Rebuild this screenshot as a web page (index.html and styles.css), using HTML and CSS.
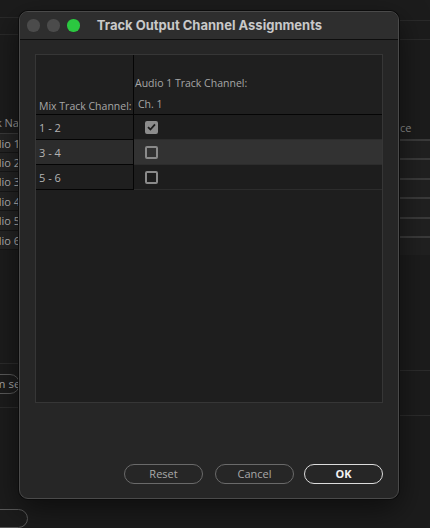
FILE: index.html
```html
<!DOCTYPE html>
<html>
<head>
<meta charset="utf-8">
<link rel="stylesheet" href="styles.css">
</head>
<body>
<div class="app">
  <div class="pane pane-left">
    <div class="ruler"></div>
    <div class="ruler ruler-2"></div>
    <div class="list">
      <div class="list-head"><span class="cut-head">Track Name</span></div>
      <div class="list-row"><span class="cut-row">Audio 1</span></div>
      <div class="list-row"><span class="cut-row">Audio 2</span></div>
      <div class="list-row"><span class="cut-row">Audio 3</span></div>
      <div class="list-row"><span class="cut-row">Audio 4</span></div>
      <div class="list-row"><span class="cut-row">Audio 5</span></div>
      <div class="list-row"><span class="cut-row">Audio 6</span></div>
    </div>
    <div class="left-foot">
      <div class="rule-a"></div>
      <div class="bg-btn"><span class="cut-btn">Custom setup</span></div>
      <div class="rule-b"></div>
      <div class="bg-btn bg-btn-bottom"></div>
    </div>
  </div>
  <div class="pane pane-right">
    <div class="ruler"></div>
    <div class="ruler ruler-2"></div>
    <div class="rlist">
      <div class="rlist-head"><span class="cut-src">Source</span></div>
      <div class="rlist-row"></div>
      <div class="rlist-row"></div>
      <div class="rlist-row"></div>
      <div class="rlist-row"></div>
      <div class="rlist-row"></div>
      <div class="rlist-row"></div>
    </div>
    <div class="right-foot">
      <div class="rule-a"></div>
      <div class="rule-b"></div>
    </div>
  </div>
</div>

<div class="dialog">
  <div class="titlebar">
    <div class="lights">
      <span class="light"></span>
      <span class="light"></span>
      <span class="light light-green"></span>
    </div>
    <div class="title">Track Output Channel Assignments</div>
  </div>
  <div class="body">
    <div class="panel">
      <div class="grid">
        <div class="cell head head-left"><span>Mix Track Channel:</span></div>
        <div class="cell head head-right">
          <span class="head-l1">Audio 1 Track Channel:</span>
          <span class="head-l2">Ch. 1</span>
        </div>

        <div class="cell rl">1 - 2</div>
        <div class="cell rr"><span class="cb cb-on"><svg width="9" height="8" viewBox="0 0 9 8"><path d="M1 4.2 L3.4 6.5 L8 1.3" fill="none" stroke="#1e1e1e" stroke-width="1.8"/></svg></span></div>

        <div class="cell rl hl">3 - 4</div>
        <div class="cell rr hl"><span class="cb"></span></div>

        <div class="cell rl">5 - 6</div>
        <div class="cell rr"><span class="cb"></span></div>
      </div>
    </div>
    <div class="buttons">
      <button class="btn">Reset</button>
      <button class="btn btn-cancel">Cancel</button>
      <button class="btn btn-ok">OK</button>
    </div>
  </div>
</div>
</body>
</html>
```

FILE: styles.css
```css
* { box-sizing: border-box; }
html, body { margin: 0; padding: 0; }
body {
  width: 430px;
  height: 528px;
  overflow: hidden;
  background: #1b1b1b;
  font-family: "Open Sans", "Noto Sans", sans-serif;
  position: relative;
}

/* background application */
.app {
  display: flex;
  width: 430px;
  height: 528px;
}
.pane {
  display: flex;
  flex-direction: column;
  overflow: hidden;
}
.pane-left { width: 215px; background: #1c1c1c; }
.pane-right { flex: 1; background: #1c1c1c; }
.ruler { height: 21px; border-bottom: 1px solid #2a2a2a; }
.ruler-2 { height: 19px; }

.list { margin-top: 77px; display: flex; flex-direction: column; }
.list-head {
  height: 22px;
  font-size: 11px;
  color: #9a9a9a;
  line-height: 22px;
  border-bottom: 1px solid #3a3a3a;
  white-space: nowrap;
}
.list-row {
  height: 19.4px;
  font-size: 11px;
  color: #b4b4b4;
  line-height: 19px;
  background: #242424;
  border-bottom: 1px solid #161616;
  white-space: nowrap;
}
.cut-head { margin-left: -26px; }
.cut-row { margin-left: -19px; }

.left-foot { display: flex; flex-direction: column; margin-top: 113px; }
.rule-a { height: 1px; background: #2c2c2c; margin-bottom: 10px; }
.bg-btn {
  height: 20px;
  margin-left: -30px;
  width: 50px;
  border: 1.5px solid #5a5a5a;
  border-radius: 10px;
  font-size: 11.5px;
  color: #a8a8a8;
  line-height: 17px;
  white-space: nowrap;
  overflow: hidden;
}
.cut-btn { margin-left: -7px; }
.rule-b { height: 1px; background: #2c2c2c; margin-top: 13px; margin-bottom: 101px; }
.bg-btn-bottom { width: 58px; height: 19px; }

.rlist { margin-top: 77px; display: flex; flex-direction: column; }
.rlist-head {
  height: 22px;
  padding-left: 161px;
  font-size: 11px;
  color: #8a8a8a;
  line-height: 22px;
  white-space: nowrap;
}
.rlist-row {
  height: 19.4px;
  background: #202020;
  border-top: 2px solid #3a3a3a;
}
.right-foot { display: flex; flex-direction: column; margin-top: 115px; }
.right-foot .rule-a { margin-bottom: 44px; }
.right-foot .rule-b { margin-top: 0; }

/* dialog */
.dialog {
  position: absolute;
  left: 19px;
  top: 11px;
  width: 380px;
  height: 488px;
  background: #262626;
  border: 1px solid #4a4a4a;
  border-radius: 9px;
  box-shadow: 0 0 0 1px #0c0c0c, 0 10px 30px rgba(0,0,0,0.55);
  display: flex;
  flex-direction: column;
  overflow: hidden;
}
.titlebar {
  height: 28px;
  flex: none;
  background: #2e2e2e;
  border-bottom: 1px solid #0e0e0e;
  position: relative;
  display: flex;
  align-items: center;
}
.lights { display: flex; gap: 7.5px; padding-left: 7px; }
.light {
  width: 12.5px;
  height: 12.5px;
  border-radius: 50%;
  background: #4b4b4b;
}
.light-green { background: #2bc840; }
.title {
  position: absolute;
  left: 0;
  right: 0;
  top: 0;
  bottom: 0;
  text-align: center;
  line-height: 26px;
  font-family: "Inter", "Liberation Sans", sans-serif;
  font-weight: 700;
  font-size: 13px;
  color: #c9c9c9;
  padding-left: 1px;
}

.body {
  flex: 1;
  display: flex;
  flex-direction: column;
  padding: 14px 15px 14px 15px;
}
.panel {
  height: 349px;
  border: 1px solid #363636;
  background: #1e1e1e;
}
.grid {
  display: grid;
  grid-template-columns: 98px 1fr;
  grid-template-rows: 60px 25px 25px 25px;
}
.cell { font-size: 11px; color: #b0b0b0; white-space: nowrap; }
.head { border-bottom: 1px solid #050505; background: #1f1f1f; font-size: 10.5px; }
.head-left {
  border-right: 1px solid #050505;
  display: flex;
  align-items: flex-end;
  padding: 0 0 1px 3px;
  color: #a6a6a6;
}
.head-right {
  display: flex;
  flex-direction: column;
  padding: 20px 0 0 1px;
  color: #a6a6a6;
}
.head-l1 { line-height: 16px; }
.head-l2 { line-height: 16px; margin-top: 5px; padding-left: 3px; }

.rl {
  background: #1f1f1f;
  border-right: 1px solid #050505;
  border-bottom: 1px solid #050505;
  padding-left: 3px;
  display: flex;
  align-items: center;
  color: #b4b4b4;
}
.rr {
  background: #1d1d1d;
  border-bottom: 1px solid #2c2c2c;
  display: flex;
  align-items: center;
  padding-left: 11px;
}
.hl { background: #323232; }
.rl.hl { background: #2c2c2c; }

.cb {
  width: 13px;
  height: 13px;
  border: 2px solid #8a8a8a;
  border-radius: 2px;
  display: flex;
  align-items: center;
  justify-content: center;
}
.cb-on { background: #8c8c8c; border-color: #8c8c8c; }

.buttons {
  display: flex;
  justify-content: flex-end;
  margin-top: 61px;
}
.btn {
  width: 79px;
  height: 20px;
  border-radius: 10px;
  border: 1.5px solid #6a6a6a;
  background: transparent;
  color: #a9a9a9;
  font-family: "Open Sans", "Noto Sans", sans-serif;
  font-size: 11px;
  padding: 0;
  line-height: 16px;
}
.btn-cancel { margin-left: 12px; }
.btn-ok {
  margin-left: 10px;
  border-color: #dcdcdc;
  color: #f2f2f2;
  font-weight: 700;
}
```
